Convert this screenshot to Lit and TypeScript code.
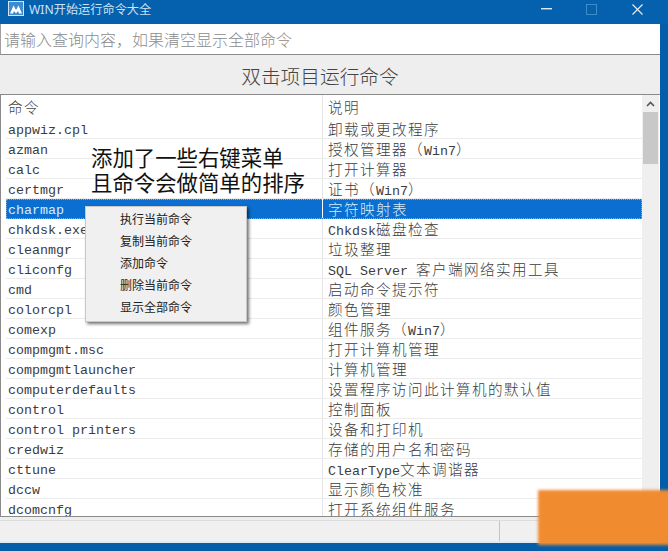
import { LitElement, html, css, TemplateResult } from "lit";
import { customElement } from "lit/decorators.js";

const ROWS: [string, string][] = [
  ["appwiz.cpl", "卸载或更改程序"],
  ["azman", "授权管理器\uFF08Win7\uFF09"],
  ["calc", "打开计算器"],
  ["certmgr", "证书\uFF08Win7\uFF09"],
  ["charmap", "字符映射表"],
  ["chkdsk.exe", "Chkdsk磁盘检查"],
  ["cleanmgr", "垃圾整理"],
  ["cliconfg", "SQL Server 客户端网络实用工具"],
  ["cmd", "启动命令提示符"],
  ["colorcpl", "颜色管理"],
  ["comexp", "组件服务\uFF08Win7\uFF09"],
  ["compmgmt.msc", "打开计算机管理"],
  ["compmgmtlauncher", "计算机管理"],
  ["computerdefaults", "设置程序访问此计算机的默认值"],
  ["control", "控制面板"],
  ["control printers", "设备和打印机"],
  ["credwiz", "存储的用户名和密码"],
  ["cttune", "ClearType文本调谐器"],
  ["dccw", "显示颜色校准"],
  ["dcomcnfg", "打开系统组件服务"],
];

const MENU = ["执行当前命令", "复制当前命令", "添加命令", "删除当前命令", "显示全部命令"];

function mixed(text: string): TemplateResult[] {
  const parts = text.match(/[\x20-\x7e]+|[^\x20-\x7e]+/g) ?? [];
  return parts.map((p) =>
    /^[\x20-\x7e]/.test(p) ? html`<span class="lat">${p}</span>` : html`<span class="cjk">${p}</span>`
  );
}

@customElement("app-root")
export class AppRoot extends LitElement {
  static styles = css`
    :host {
      display: block;
      position: relative;
      width: 668px;
      height: 551px;
      overflow: hidden;
      background: #045da9;
      font-family: "Noto Sans", "Noto Sans CJK SC", sans-serif;
    }
    .title {
      height: 24px;
      display: flex;
      align-items: flex-start;
      background: #0560ae;
      color: #c9e3f7;
      font-size: 12.2px;
    }
    .logo {
      margin: 1px 5px 0 8px;
      flex: none;
    }
    .title-text {
      flex: 1;
      line-height: 20px;
    }
    .ctrl {
      width: 45.5px;
      height: 18px;
      flex: none;
      display: flex;
      align-items: center;
      justify-content: center;
    }
    .ctrls {
      display: flex;
      margin-right: 8px;
    }
    .body {
      width: 660px;
      height: 519px;
      display: flex;
      flex-direction: column;
      background: #eeeeee;
    }
    .search {
      height: 31px;
      flex: none;
      box-sizing: border-box;
      background: #fff;
      border-bottom: 1px solid #8a8a8a;
      border-left: 1px solid #a0a0a0;
      padding-left: 3px;
      display: flex;
      align-items: center;
      color: #8c8c8c;
      font-size: 16px;
      font-weight: 300;
      font-family: "Noto Sans CJK SC", sans-serif;
    }
    .band {
      height: 39px;
      flex: none;
      box-sizing: border-box;
      padding: 2px 20px 0 0;
      display: flex;
      align-items: center;
      justify-content: center;
      font-size: 19.7px;
      font-weight: 300;
      color: #444;
      font-family: "Noto Sans CJK SC", sans-serif;
    }
    .table {
      height: 423px;
      flex: none;
      display: flex;
      background: #fff;
      border-top: 1px solid #8a8a8a;
      border-bottom: 1px solid #8a8a8a;
      border-left: 1px solid #8a8a8a;
      box-sizing: border-box;
      overflow: hidden;
    }
    .list {
      flex: 1;
      min-width: 0;
      overflow: hidden;
    }
    .row {
      height: 20px;
      display: grid;
      grid-template-columns: 321px 1fr;
      box-sizing: border-box;
      border-bottom: 1px solid #ececec;
      color: #3c3c3c;
      font-size: 16px;
      line-height: 19px;
      white-space: nowrap;
      margin-left: 5px;
    }
    .row > div {
      overflow: hidden;
      margin-left: -5px;
      padding-left: 7px;
      font-family: "Liberation Mono", "Noto Sans CJK SC", monospace;
    }
    .row:not(.head) > div:first-child .lat {
      position: relative;
      top: 2px;
    }
    .row > div + div {
      padding-left: 5px;
      border-left: 1px solid #e4e4e4;
    }
    .row.head {
      height: 24px;
      line-height: 23px;
      border-bottom: none;
      color: #444;
    }
    .row.sel {
      background: #0a6fd0;
      color: #d8ecfa;
      border-bottom-color: #0a6fd0;
      outline: 1px dotted rgba(255, 255, 255, 0.45);
      outline-offset: -1px;
    }
    .row.sel > div {
      margin-left: 0;
      padding-left: 2px;
    }
    .row.sel > div + div {
      border-left-color: #fff;
      margin-left: -5px;
      padding-left: 5px;
    }
    .lat {
      font-size: 13.33px;
    }
    .cjk {
      font-family: "Noto Sans CJK SC", sans-serif;
      font-weight: 300;
      font-size: 14.6px;
      letter-spacing: 1.4px;
    }
    .scroll {
      width: 17px;
      flex: none;
      background: #efefef;
      display: flex;
      flex-direction: column;
      align-items: center;
      margin-right: 1px;
    }
    .arrow {
      height: 17px;
      display: flex;
      align-items: center;
      justify-content: center;
    }
    .thumb {
      width: 15px;
      height: 52px;
      background: #c8c8c8;
    }
    .status {
      flex: 1;
      display: flex;
      flex-direction: column;
    }
    .status-main {
      height: 21px;
      flex: none;
      display: flex;
      justify-content: flex-end;
      border-top: 1px solid #dcdcdc;
      margin-top: 3px;
      background: #f0f0f0;
      box-sizing: border-box;
    }
    .grip {
      width: 160px;
      border-left: 1px solid #c4c4c4;
    }
    .status-foot {
      flex: 1;
      background: #dcebf6;
    }
    .note {
      position: absolute;
      left: 91px;
      top: 145px;
      color: #111;
      font-size: 21.4px;
      line-height: 24.5px;
      font-family: "Noto Sans CJK SC", sans-serif;
      white-space: nowrap;
    }
    .menu {
      position: absolute;
      left: 85px;
      top: 206px;
      width: 162px;
      height: 116px;
      box-sizing: border-box;
      padding: 1px 0;
      background: #f0f0f0;
      border: 1px solid #c8c8c8;
      box-shadow: 2px 2px 3px rgba(0, 0, 0, 0.55);
    }
    .menu div {
      height: 22px;
      line-height: 22px;
      padding-left: 34px;
      font-size: 12px;
      color: #222;
      font-family: "Noto Sans CJK SC", sans-serif;
    }
    .patch {
      position: absolute;
      left: 538px;
      top: 490px;
      width: 140px;
      height: 55px;
      background: #f08b30;
      filter: blur(1.5px);
    }
  `;

  render() {
    return html`
      <div class="title">
        <svg class="logo" width="16" height="15" viewBox="0 0 16 15">
          <rect x="0.5" y="0.5" width="15" height="14" fill="#3d8bd0" stroke="#cfe4f5" />
          <path d="M2 12.5 L5.5 4.5 L8 9 L10.5 4.5 L14 12.5 L11 12.5 L10 10 L8 12.5 L6 10 L5 12.5 Z" fill="#fff" />
        </svg>
        <div class="title-text">WIN开始运行命令大全</div>
        <div class="ctrls">
          <div class="ctrl">
            <svg width="11" height="2" viewBox="0 0 11 2"><rect width="11" height="1.4" fill="#d6eafa" /></svg>
          </div>
          <div class="ctrl">
            <svg width="11" height="11" viewBox="0 0 11 11"><rect x="0.5" y="0.5" width="10" height="10" fill="none" stroke="#3f8ccd" /></svg>
          </div>
          <div class="ctrl">
            <svg width="11" height="11" viewBox="0 0 11 11"><path d="M0.5 0.5 L10.5 10.5 M10.5 0.5 L0.5 10.5" stroke="#e4f1fb" stroke-width="1.1" /></svg>
          </div>
        </div>
      </div>
      <div class="body">
        <div class="search">请输入查询内容\uFF0C如果清空显示全部命令</div>
        <div class="band">双击项目运行命令</div>
        <div class="table">
          <div class="list">
            <div class="row head">
              <div>${mixed("命令")}</div>
              <div>${mixed("说明")}</div>
            </div>
            ${ROWS.map(
              ([a, b]) => html`
                <div class="row ${a === "charmap" ? "sel" : ""}">
                  <div>${mixed(a)}</div>
                  <div>${mixed(b)}</div>
                </div>
              `
            )}
          </div>
          <div class="scroll">
            <div class="arrow">
              <svg width="9" height="6" viewBox="0 0 9 6"><path d="M1 5 L4.5 1.5 L8 5" fill="none" stroke="#555" stroke-width="1.6" /></svg>
            </div>
            <div class="thumb"></div>
          </div>
        </div>
        <div class="status">
          <div class="status-main"><div class="grip"></div></div>
          <div class="status-foot"></div>
        </div>
      </div>
      <div class="note">添加了一些右键菜单<br />且命令会做简单的排序</div>
      <div class="menu">${MENU.map((m) => html`<div>${m}</div>`)}</div>
      <div class="patch"></div>
    `;
  }
}
